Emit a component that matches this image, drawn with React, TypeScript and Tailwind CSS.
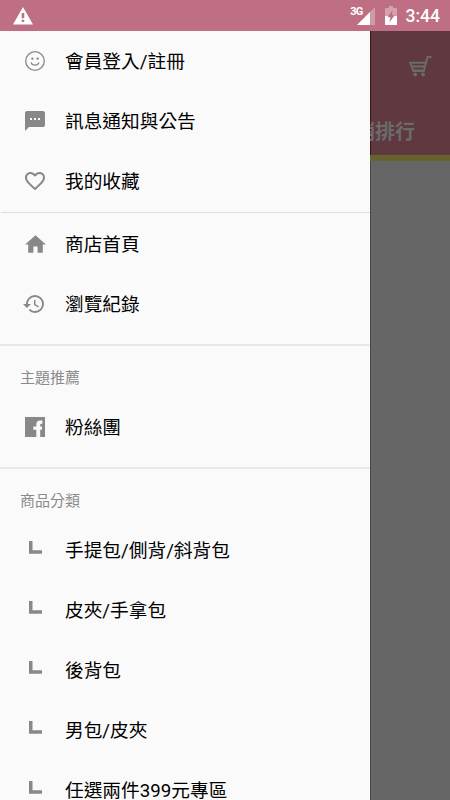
import type { ReactNode } from "react";
import { MdSms, MdFavoriteBorder, MdHome, MdHistory } from "react-icons/md";

type Item = { label: string; icon: ReactNode };

function WarningIcon() {
  return (
    <svg width="20" height="18" viewBox="0 0 20 18" fill="currentColor">
      <path
        fillRule="evenodd"
        d="M10 0l10 17.500H0zM8.700 6v5.200h2.600V6zM8.700 12.700v2.300h2.600v-2.300z"
      />
    </svg>
  );
}

function SmileIcon() {
  return (
    <svg width="22" height="22" viewBox="0 0 22 22" fill="none" stroke="currentColor">
      <circle cx="11" cy="11" r="9.3" strokeWidth="1.3" />
      <circle cx="8.4" cy="8.6" r="1.2" fill="currentColor" stroke="none" />
      <circle cx="13.6" cy="8.6" r="1.2" fill="currentColor" stroke="none" />
      <path d="M7.2 12.8c1 3 6.600 3 7.600 0" strokeWidth="1.2" strokeLinecap="round" />
    </svg>
  );
}

function FacebookIcon() {
  return (
    <svg width="20" height="20" viewBox="0 0 20 20" fill="currentColor">
      <path d="M0 0h20v20h-4.800v-7.300h1.800V9.600h-1.800V8c0-.9.500-1.300 1.300-1.300h.9V3.600h-2.200c-2.500 0-3.900 1.600-3.900 4v2H8.300v3.100h3V20H0z" />
    </svg>
  );
}

function CornerIcon() {
  return (
    <svg width="13" height="13" viewBox="0 0 13 13" fill="currentColor" className="mb-[6px]">
      <path d="M0 0h3.500v9.200H13v3.500H0z" />
    </svg>
  );
}

function CartIcon() {
  return (
    <svg width="24" height="22" viewBox="0 0 24 22" fill="none" stroke="currentColor" strokeWidth="2">
      <path d="M23.500 2h-4L15.800 16H5.500L2.200 7.800h15.300M3.600 11.500h13M5 15.500h10.800" />
      <circle cx="7.200" cy="19.500" r="1.900" fill="currentColor" stroke="none" />
      <circle cx="15" cy="19.500" r="1.900" fill="currentColor" stroke="none" />
    </svg>
  );
}

const account: Item[] = [
  { label: "會員登入/註冊", icon: <SmileIcon /> },
  { label: "訊息通知與公告", icon: <MdSms size={24} /> },
  { label: "我的收藏", icon: <MdFavoriteBorder size={24} /> },
];

const store: Item[] = [
  { label: "商店首頁", icon: <MdHome size={25} /> },
  { label: "瀏覽紀錄", icon: <MdHistory size={24} className="mr-[2px]" /> },
];

const topics: Item[] = [{ label: "粉絲團", icon: <FacebookIcon /> }];

const categories: Item[] = [
  "手提包/側背/斜背包",
  "皮夾/手拿包",
  "後背包",
  "男包/皮夾",
  "任選兩件399元專區",
].map((label) => ({ label, icon: <CornerIcon /> }));

function StatusBar() {
  return (
    <header className="flex h-[31px] shrink-0 items-center bg-[#bf6f83] pl-[12.500px] pr-[10px] text-white">
      <WarningIcon />
      <div className="ml-auto flex h-full items-start">
        <span className="mt-[5px] font-['Roboto'] text-[11px] font-bold leading-[13px] tracking-[-0.8px]">3G</span>
        <svg width="18" height="18" viewBox="0 0 18 18" className="-ml-[6px] mt-[7px]" fill="currentColor">
          <path d="M18 0v18H13V5z" fillOpacity=".3" />
          <path d="M13 5v13H0z" />
        </svg>
        <svg width="12" height="19" viewBox="0 0 12 19" className="ml-[10px] mt-[6px]" fill="currentColor">
          <path d="M4 0h4v2h4v8H0V2h4z" fillOpacity=".35" />
          <path d="M0 10h12v9H0z" />
          <path d="M7.800 4L2.500 11.200h3L4.300 16.500l5.400-7.300H6.800z" fill="#bf6f83" />
        </svg>
        <span className="ml-[9px] mt-[5px] font-['Roboto'] text-[17.500px] font-medium leading-[23px]">3:44</span>
      </div>
    </header>
  );
}

function MenuRow({ label, icon }: Item) {
  return (
    <li className="flex h-[60px] shrink-0 items-center">
      <span className="flex w-[70px] justify-center text-[#888]">{icon}</span>
      <span className="-ml-[5px] whitespace-nowrap pt-[2px] text-[18.700px] leading-[28px] text-black">{label}</span>
    </li>
  );
}

function Menu({ items }: { items: Item[] }) {
  return (
    <ul>
      {items.map((item) => (
        <MenuRow key={item.label} {...item} />
      ))}
    </ul>
  );
}

function SectionTitle({ children }: { children: ReactNode }) {
  return (
    <h2 className="mt-[10px] h-[53px] border-t-2 border-[#e8e8e8] pl-[20px] pt-[21px] text-[15px] leading-[22px] text-[#8a8a8a]">
      {children}
    </h2>
  );
}

export default function App() {
  return (
    <div className="flex h-[800px] w-[450px] flex-col overflow-hidden font-['Roboto','Noto_Sans_CJK_TC',sans-serif]">
      <StatusBar />
      <div className="flex min-h-0 flex-1">
        <nav className="w-[370px] shrink-0 overflow-hidden bg-[#fafafa]">
          <Menu items={account} />
          <div className="my-px ml-px h-px bg-[#dedede]" />
          <Menu items={store} />
          <SectionTitle>主題推薦</SectionTitle>
          <Menu items={topics} />
          <SectionTitle>商品分類</SectionTitle>
          <Menu items={categories} />
        </nav>

        {/* page dimmed behind the drawer */}
        <main className="flex min-w-0 flex-1 flex-col bg-[#666] shadow-[inset_1px_0_0_rgba(0,0,0,0.3)]">
          <div className="flex h-[130px] shrink-0 flex-col border-b-[6px] border-[#65642f] bg-[#5f3840] text-[#6b6b69] shadow-[inset_1px_0_0_#3f1217]">
            <div className="flex h-[70px] items-center justify-end pr-[18px]">
              <CartIcon />
            </div>
            <div className="flex h-[54px] items-center justify-end overflow-hidden whitespace-nowrap pr-[35px] pt-[8px] text-[20px] font-bold">
              銷排行
            </div>
          </div>
        </main>
      </div>
    </div>
  );
}
